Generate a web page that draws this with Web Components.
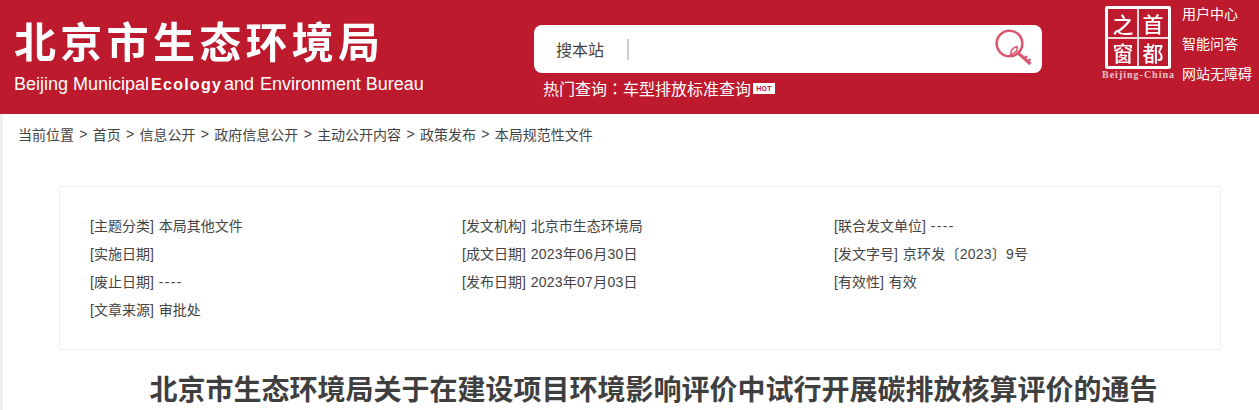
<!DOCTYPE html>
<html lang="zh-CN">
<head>
<meta charset="utf-8">
<style>
html,body{margin:0;padding:0;background:#f0f0f0;height:410px;overflow:hidden}
body{font-family:"Liberation Sans","Noto Sans CJK SC",sans-serif;color:#444}
</style>
</head>
<body>
<bj-header></bj-header>
<bj-main>
  <bj-crumbs path="当前位置|首页|信息公开|政府信息公开|主动公开内容|政策发布|本局规范性文件"></bj-crumbs>
  <bj-meta>
    <bj-meta-item label="主题分类" value="本局其他文件"></bj-meta-item>
    <bj-meta-item label="发文机构" value="北京市生态环境局"></bj-meta-item>
    <bj-meta-item label="联合发文单位" value="----"></bj-meta-item>
    <bj-meta-item label="实施日期" value=""></bj-meta-item>
    <bj-meta-item label="成文日期" value="2023年06月30日"></bj-meta-item>
    <bj-meta-item label="发文字号" value="京环发〔2023〕9号"></bj-meta-item>
    <bj-meta-item label="废止日期" value="----"></bj-meta-item>
    <bj-meta-item label="发布日期" value="2023年07月03日"></bj-meta-item>
    <bj-meta-item label="有效性" value="有效"></bj-meta-item>
    <bj-meta-item label="文章来源" value="审批处"></bj-meta-item>
  </bj-meta>
  <bj-title>北京市生态环境局关于在建设项目环境影响评价中试行开展碳排放核算评价的通告</bj-title>
</bj-main>
<script>
const CJK='"Liberation Sans","Noto Sans CJK SC",sans-serif';
class Base extends HTMLElement{
  html(s){this.attachShadow({mode:'open'}).innerHTML=s}
}
customElements.define('bj-logo',class extends Base{connectedCallback(){this.html(`<style>
:host{display:block;width:440px;padding:12px 0 0 14px;box-sizing:border-box}
.cn{font:700 42px/56px "Noto Sans CJK SC",sans-serif;letter-spacing:4.3px;color:#fff;white-space:nowrap;filter:blur(.3px)}
.en{font:18px/24px "Liberation Sans",sans-serif;color:#fff;white-space:nowrap;margin-top:4px}
b{font-size:16px;letter-spacing:1.25px;margin:0 2px 0 2px}
.g{margin-left:1px;letter-spacing:-.03px}
</style><div class="cn">北京市生态环境局</div><div class="en">Beijing Municipal<b>Ecology</b>and <span class="g">Environment Bureau</span></div>`)}});
customElements.define('bj-search',class extends Base{connectedCallback(){this.html(`<style>
:host{display:block;width:508px;padding-top:25px}
.box{height:48px;background:#fff;border-radius:8px;display:flex;align-items:center;position:relative}
.l{font:16px/22px "Noto Sans CJK SC",sans-serif;color:#444;padding-left:22px;width:71px;flex:none}
.bar{width:2px;height:21px;background:#ccc}
svg{position:absolute;right:7px;top:3px}
.hot{font:16px/20px "Noto Sans CJK SC",sans-serif;color:#fff;padding:5px 0 0 9px;display:flex;align-items:center;white-space:nowrap}
.c{font-family:"Noto Sans CJK TC",sans-serif}
.tag{background:#fff;color:#c8102e;font:700 7px/11px "Liberation Sans",sans-serif;width:22px;height:11px;text-align:center;margin:1px 0 0 2px;letter-spacing:.3px}
</style><div class="box"><span class="l">搜本站</span><span class="bar"></span>
<svg width="42" height="42" viewBox="0 0 42 42" fill="none" stroke="#d9576f">
<circle cx="16.500" cy="15.500" r="12.800" stroke-width="2.600"/>
<path d="M17.500 26.500c0-4 3-7 6.500-8 1 3.500-1.500 7-6.500 8z" stroke-width="1.500"/>
<path d="M24 24l13.500 12" stroke-width="3.200"/><path d="M31 31l3-3M34.500 34l3-3" stroke-width="2.400"/>
</svg></div>
<div class="hot"><span>热门查询<span class="c" lang="zh-TW">：</span>车型排放标准查询</span><span class="tag">HOT</span></div>`)}});
customElements.define('bj-emblem',class extends Base{connectedCallback(){this.html(`<style>
:host{display:block;width:80px;padding-top:6px}
.f{width:66px;height:63px;box-sizing:border-box;border:3px solid #fff;border-radius:2px;margin-left:3px;display:grid;grid-template-columns:1fr 1fr;grid-template-rows:1fr 1fr;font:500 21px/24px "Noto Sans CJK SC",sans-serif;color:#fff;place-items:center;filter:blur(.3px);background:
linear-gradient(#f3d5da,#f3d5da) 50% 0/2px 100% no-repeat,linear-gradient(#f3d5da,#f3d5da) 0 50%/100% 2px no-repeat,#be1a2e}
.f span{background:#be1a2e;padding:0 1px}
.en{font:700 10px/12px "Liberation Serif",serif;color:#e9c6cc;letter-spacing:1px;white-space:nowrap;margin-top:0}
</style><div class="f"><span>之</span><span>首</span><span>窗</span><span>都</span></div><div class="en">Beijing-China</div>`)}});
customElements.define('bj-quick',class extends Base{connectedCallback(){this.html(`<style>
:host{display:flex;flex-direction:column;gap:10px;padding-top:3px;font:14px/20px "Noto Sans CJK SC",sans-serif;color:#fff;white-space:nowrap}
</style><span>用户中心</span><span>智能问答</span><span>网站无障碍</span>`)}});
customElements.define('bj-header',class extends Base{connectedCallback(){this.html(`<style>
:host{display:flex;height:114px;background:#be1a2e;overflow:hidden}
.s{margin-left:94px}.e{margin-left:60px}
</style><bj-logo></bj-logo><bj-search class="s"></bj-search><bj-emblem class="e"></bj-emblem><bj-quick></bj-quick>`)}});
customElements.define('bj-main',class extends Base{connectedCallback(){this.html(`<style>
:host{display:block;margin-left:3px;background:#fff;height:296px;overflow:hidden}
</style><slot></slot>`)}});
customElements.define('bj-crumbs',class extends Base{connectedCallback(){
const p=this.getAttribute('path').split('|').map(t=>`<span>${t}</span>`).join('<i>&gt;</i>');
this.html(`<style>
:host{display:flex;height:18px;padding:11px 0 0 15px;font:14px/18px "Noto Sans CJK SC",sans-serif;color:#444;white-space:nowrap}
i{font:14px/18px "Liberation Sans",sans-serif;margin:0 5.3px}
</style>${p}`)}});
customElements.define('bj-meta',class extends Base{connectedCallback(){this.html(`<style>
:host{display:grid;grid-template-columns:372px 372px 1fr;grid-auto-rows:28px;margin:43px 38px 0 56px;box-sizing:border-box;height:164px;border:1px solid #eeeee6;padding:25px 30px 0}
</style><slot></slot>`)}});
customElements.define('bj-meta-item',class extends Base{connectedCallback(){
const l=this.getAttribute('label'),v=this.getAttribute('value');
const ls=v==='----'?1.4:/\d/.test(v)?.25:0;
this.html(`<style>:host{display:block;font:14px/28px ${CJK};color:#444;white-space:nowrap}
.v{margin-left:1px;letter-spacing:${ls}px}</style>[${l}] <span class="v">${v}</span>`)}});
customElements.define('bj-title',class extends Base{connectedCallback(){this.html(`<style>
:host{display:block;text-align:center;font:700 28px/36px "Noto Sans CJK SC",sans-serif;color:#3f3f3f;padding:20px 0 0 45px;white-space:nowrap}
</style><slot></slot>`)}});
</script>
</body>
</html>
